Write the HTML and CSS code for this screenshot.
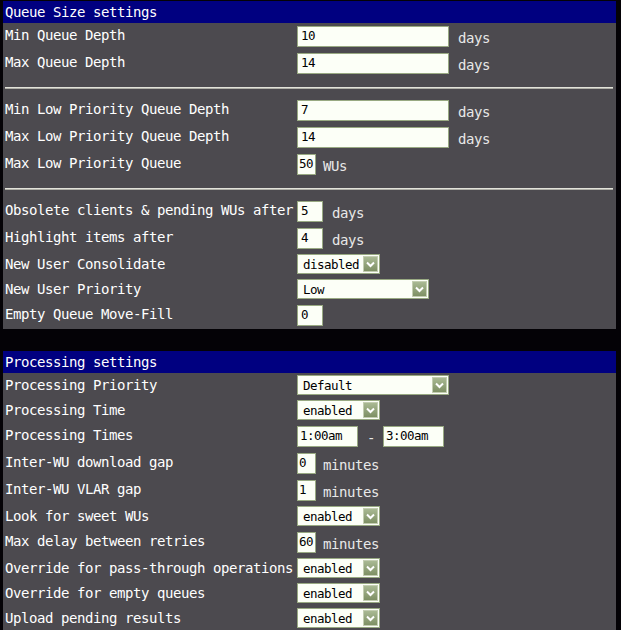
FILE: index.html
```html
<!doctype html>
<html lang="en">
  <head>
    <meta charset="UTF-8" />
    <title>Queue settings</title>
    <link rel="stylesheet" href="styles.css">
  </head>
  <body>
    <!-- Queue size -->
    <section class="panel">
      <div class="panel-head">Queue Size settings</div>

      <div class="row">
        <div class="label">Min Queue Depth</div>
        <div class="ctrl"><input class="txt w152" type="text" value="10"><span class="unit">days</span></div>
      </div>
      <div class="row">
        <div class="label">Max Queue Depth</div>
        <div class="ctrl"><input class="txt w152" type="text" value="14"><span class="unit">days</span></div>
      </div>

      <div class="divider"></div>

      <div class="row">
        <div class="label">Min Low Priority Queue Depth</div>
        <div class="ctrl"><input class="txt w152" type="text" value="7"><span class="unit">days</span></div>
      </div>
      <div class="row">
        <div class="label">Max Low Priority Queue Depth</div>
        <div class="ctrl"><input class="txt w152" type="text" value="14"><span class="unit">days</span></div>
      </div>
      <div class="row">
        <div class="label">Max Low Priority Queue</div>
        <div class="ctrl"><input class="txt w19" type="text" value="50"><span class="unit short">WUs</span></div>
      </div>

      <div class="divider"></div>

      <div class="row">
        <div class="label">Obsolete clients &amp; pending WUs after</div>
        <div class="ctrl"><input class="txt w26" type="text" value="5"><span class="unit">days</span></div>
      </div>
      <div class="row">
        <div class="label">Highlight items after</div>
        <div class="ctrl"><input class="txt w26" type="text" value="4"><span class="unit">days</span></div>
      </div>
      <div class="row sel-row">
        <div class="label">New User Consolidate</div>
        <div class="ctrl">
          <div class="select w83"><span class="select-value">disabled</span><span class="select-btn"><svg width="13" height="14" viewBox="0 0 13 14"><path d="M3 5.5 L6.5 9 L10 5.5" fill="none" stroke="#fff" stroke-width="2"/></svg></span></div>
        </div>
      </div>
      <div class="row sel-row">
        <div class="label">New User Priority</div>
        <div class="ctrl">
          <div class="select w132"><span class="select-value">Low</span><span class="select-btn"><svg width="13" height="14" viewBox="0 0 13 14"><path d="M3 5.5 L6.5 9 L10 5.5" fill="none" stroke="#fff" stroke-width="2"/></svg></span></div>
        </div>
      </div>
      <div class="row">
        <div class="label">Empty Queue Move-Fill</div>
        <div class="ctrl"><input class="txt w26" type="text" value="0"></div>
      </div>
    </section>

    <!-- Processing -->
    <section class="panel">
      <div class="panel-head">Processing settings</div>

      <div class="row sel-row">
        <div class="label">Processing Priority</div>
        <div class="ctrl">
          <div class="select w152"><span class="select-value">Default</span><span class="select-btn"><svg width="13" height="14" viewBox="0 0 13 14"><path d="M3 5.5 L6.5 9 L10 5.5" fill="none" stroke="#fff" stroke-width="2"/></svg></span></div>
        </div>
      </div>
      <div class="row sel-row">
        <div class="label">Processing Time</div>
        <div class="ctrl">
          <div class="select w83"><span class="select-value">enabled</span><span class="select-btn"><svg width="13" height="14" viewBox="0 0 13 14"><path d="M3 5.5 L6.5 9 L10 5.5" fill="none" stroke="#fff" stroke-width="2"/></svg></span></div>
        </div>
      </div>
      <div class="row">
        <div class="label">Processing Times</div>
        <div class="ctrl"><input class="txt w61" type="text" value="1:00am"><span class="dash">-</span><input class="txt w61" type="text" value="3:00am"></div>
      </div>
      <div class="row">
        <div class="label">Inter-WU download gap</div>
        <div class="ctrl"><input class="txt w19" type="text" value="0"><span class="unit short">minutes</span></div>
      </div>
      <div class="row">
        <div class="label">Inter-WU VLAR gap</div>
        <div class="ctrl"><input class="txt w19" type="text" value="1"><span class="unit short">minutes</span></div>
      </div>
      <div class="row sel-row">
        <div class="label">Look for sweet WUs</div>
        <div class="ctrl">
          <div class="select w83"><span class="select-value">enabled</span><span class="select-btn"><svg width="13" height="14" viewBox="0 0 13 14"><path d="M3 5.5 L6.5 9 L10 5.5" fill="none" stroke="#fff" stroke-width="2"/></svg></span></div>
        </div>
      </div>
      <div class="row">
        <div class="label">Max delay between retries</div>
        <div class="ctrl"><input class="txt w19" type="text" value="60"><span class="unit short">minutes</span></div>
      </div>
      <div class="row sel-row">
        <div class="label">Override for pass-through operations</div>
        <div class="ctrl">
          <div class="select w83"><span class="select-value">enabled</span><span class="select-btn"><svg width="13" height="14" viewBox="0 0 13 14"><path d="M3 5.5 L6.5 9 L10 5.5" fill="none" stroke="#fff" stroke-width="2"/></svg></span></div>
        </div>
      </div>
      <div class="row sel-row">
        <div class="label">Override for empty queues</div>
        <div class="ctrl">
          <div class="select w83"><span class="select-value">enabled</span><span class="select-btn"><svg width="13" height="14" viewBox="0 0 13 14"><path d="M3 5.5 L6.5 9 L10 5.5" fill="none" stroke="#fff" stroke-width="2"/></svg></span></div>
        </div>
      </div>
      <div class="row sel-row">
        <div class="label">Upload pending results</div>
        <div class="ctrl">
          <div class="select w83"><span class="select-value">enabled</span><span class="select-btn"><svg width="13" height="14" viewBox="0 0 13 14"><path d="M3 5.5 L6.5 9 L10 5.5" fill="none" stroke="#fff" stroke-width="2"/></svg></span></div>
        </div>
      </div>
    </section>
  </body>
</html>
```

FILE: styles.css
```css
* {
  margin: 0;
  padding: 0;
  box-sizing: border-box;
}

body {
  background: #040206;
  font-family: 'DejaVu Sans Mono', 'Liberation Mono', monospace;
  font-size: 14px;
  letter-spacing: -0.43px;
  line-height: 16px;
  color: #fff;
  padding-top: 1px;
}

.panel {
  width: 613px;
  margin-left: 3px;
  background: #4c4a4f;
}

.panel + .panel {
  margin-top: 22px;
}

.panel-head {
  height: 22px;
  line-height: 22px;
  padding-left: 2px;
  background: #000080;
  color: #fff;
}

.row {
  display: grid;
  grid-template-columns: 292px 1fr;
  padding: 3px 0 3px 2px;
}

.row.sel-row {
  padding: 2px 0 3px 2px;
}

.label {
  padding-top: 1px;
  white-space: nowrap;
}

.sel-row .label {
  padding-top: 2px;
}

.ctrl {
  display: flex;
  align-items: flex-start;
}

/* control text is a narrower face than the labels */
.txt,
.select {
  font-size: 12.5px;
  letter-spacing: -0.53px;
  color: #000;
  background: #fcfff7;
  border: 1px solid #98a982;
}

.txt {
  height: 21px;
  font-family: inherit;
  padding: 0 0 2px 3px;
  outline: none;
}

.w19 { width: 19px; padding-left: 1px; }
.w26 { width: 26px; }
.w61 { width: 61px; padding-left: 2px; }
.w83 { width: 83px; }
.w132 { width: 132px; }
.w152 { width: 152px; }

.unit {
  margin: 4px 0 0 9px;
  color: #e8e8e8;
}

.unit.short {
  margin-left: 7px;
}

.dash {
  margin: 4px 8px 0 9px;
  color: #e8e8e8;
}

.divider {
  height: 2px;
  margin: 10px 3px 8px 2px;
  border-top: 1px solid #e2e2da;
  border-bottom: 1px solid #aeaea6;
}

.select {
  display: flex;
  height: 20px;
  padding: 1px;
}

.select-value {
  flex: 1;
  padding: 1px 0 0 4px;
  white-space: nowrap;
}

.select-btn {
  display: flex;
  align-items: center;
  justify-content: center;
  width: 15px;
  height: 16px;
  background: linear-gradient(#a9b993, #7e9064);
  border: 1px solid #c3cdb1;
}
```
